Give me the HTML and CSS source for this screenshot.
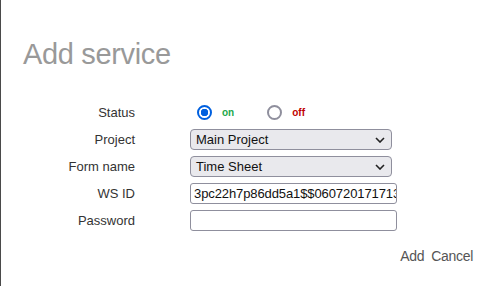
FILE: index.html
```html
<!DOCTYPE html>
<html>
<head>
<meta charset="utf-8">
<link rel="stylesheet" href="styles.css">
</head>
<body>
<div class="dialog">
  <h1 class="title">Add service</h1>
  <form class="form">
    <div class="label">Status</div>
    <div class="radios">
      <span class="radio checked"></span><span class="opt on">on</span>
      <span class="radio"></span><span class="opt off">off</span>
    </div>
    <div class="label">Project</div>
    <div class="select">Main Project<svg class="chev" width="10" height="6" viewBox="0 0 10 6"><path d="M1 1l4 4 4-4" fill="none" stroke="#222" stroke-width="1.6"/></svg></div>
    <div class="label">Form name</div>
    <div class="select">Time Sheet<svg class="chev" width="10" height="6" viewBox="0 0 10 6"><path d="M1 1l4 4 4-4" fill="none" stroke="#222" stroke-width="1.6"/></svg></div>
    <div class="label">WS ID</div>
    <div class="input"><span class="val">3pc22h7p86dd5a1$$060720171713</span></div>
    <div class="label">Password</div>
    <div class="input"></div>
  </form>
  <div class="actions"><span>Add</span><span>Cancel</span></div>
</div>
</body>
</html>
```
FILE: styles.css
```css
html, body { margin: 0; padding: 0; background: #fff; }
body { width: 495px; height: 286px; overflow: hidden; font-family: "Liberation Sans", Arial, sans-serif; }
.dialog { height: 286px; box-sizing: border-box; border-left: 1px solid #4a4a4a; }
.title { margin: 0; padding: 36px 0 0 22px; font-weight: normal; font-size: 29px; line-height: 36px; color: #999; letter-spacing: -0.35px; }
.form { display: grid; grid-template-columns: 134px 1fr; column-gap: 55px; grid-auto-rows: 27px; margin-top: 27px; }
.label { text-align: right; font-size: 13px; color: #333; line-height: 27px; }
.radios { display: flex; align-items: center; padding-left: 7px; }
.radio { width: 11px; height: 11px; border: 2px solid #8f8f9d; border-radius: 50%; box-sizing: content-box; }
.radio.checked { border-color: #0060df; background: radial-gradient(circle, #0060df 0 3.5px, #fff 4px); }
.opt { font-size: 10px; font-weight: bold; margin-left: 10px; }
.on { color: #21a84b; margin-right: 33px; }
.off { color: #c00000; }
.select { align-self: center; width: 202px; height: 21px; box-sizing: border-box; background: #e9e9ed; border: 1px solid #8f8f9d; border-radius: 4px; font-size: 13px; color: #111; line-height: 19px; padding-left: 5px; display: flex; justify-content: space-between; align-items: center; padding-right: 6px; }
.input { align-self: center; width: 207px; height: 21px; box-sizing: border-box; border: 1px solid #8f8f9d; border-radius: 3px; font-size: 13px; color: #111; line-height: 19px; padding-left: 3px; overflow: hidden; white-space: nowrap; }
.val { letter-spacing: -0.1px; }
.actions { display: flex; justify-content: flex-end; gap: 7px; padding-right: 22px; margin-top: 14px; font-size: 14px; color: #555; letter-spacing: -0.3px; }
```
